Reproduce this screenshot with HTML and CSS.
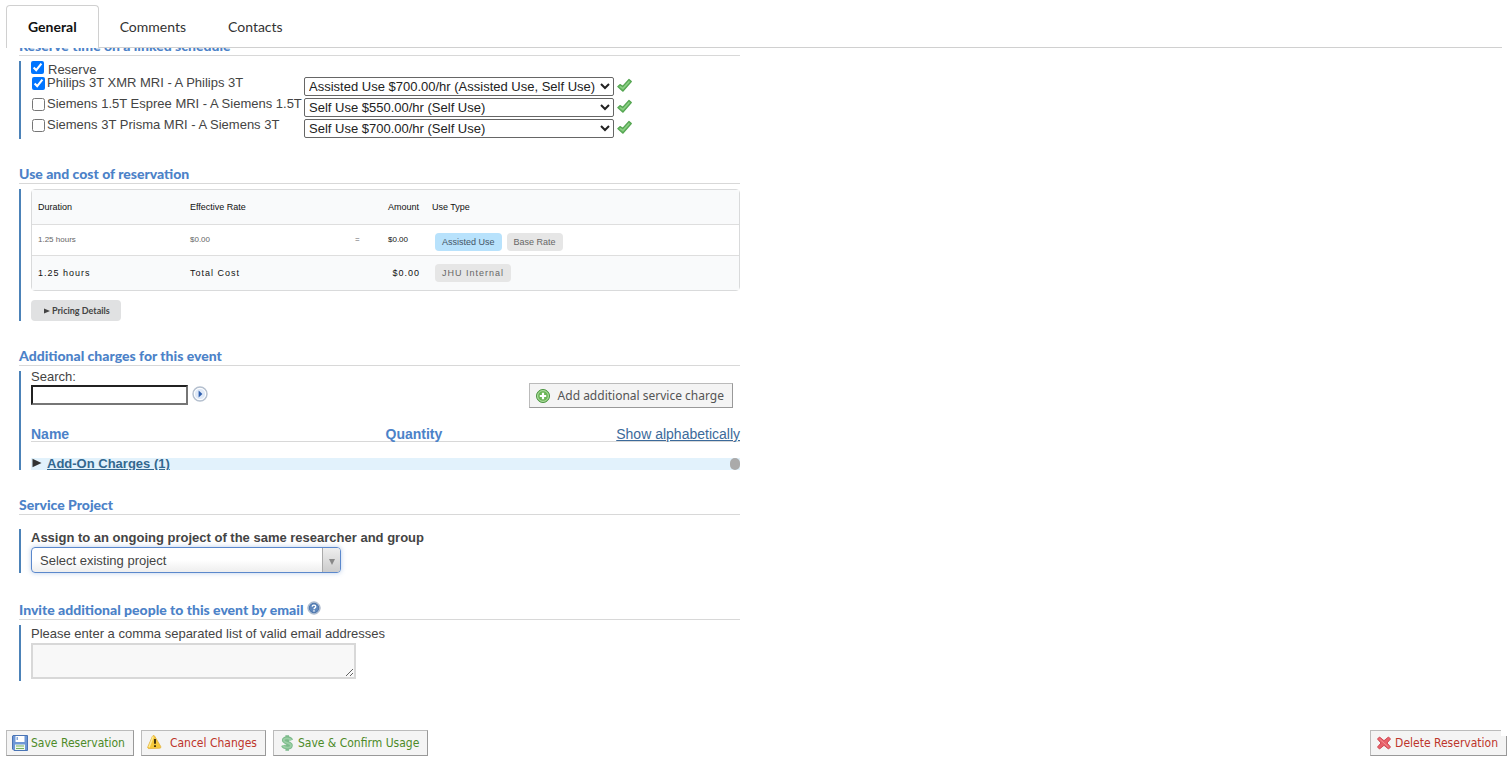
FILE: index.html
```html
<!DOCTYPE html>
<html lang="en">
<head>
    <meta charset="UTF-8">
    <meta name="viewport" content="width=device-width, initial-scale=1.0">
    <title>Reservation</title>
    <link rel="stylesheet" href="styles.css">
</head>
<body>
    <!-- Shared icons -->
    <svg class="icon-defs" aria-hidden="true">
        <symbol id="icon-check" viewBox="0 0 15 15">
            <path d="M.8 8.600 3 6.600l2.700 1.700L12 1.500l2.300 2L6 13.200z" fill="#6fbf6a" stroke="#55a552" stroke-width="1.200" stroke-linejoin="round"/>
            <path d="M3 8.500l3 2 6.300-7" fill="none" stroke="#8fd088" stroke-width="1.200"/>
        </symbol>
    </svg>

    <nav class="tabs">
        <a href="#general" class="tab active">General</a>
        <a href="#comments" class="tab">Comments</a>
        <a href="#contacts" class="tab">Contacts</a>
    </nav>

    <main class="panel" id="general">
        <!-- Linked schedule -->
        <section class="section scrolled">
            <h2>Reserve time on a linked schedule</h2>
            <div class="block linked">
                <label class="reserve"><input type="checkbox" checked> Reserve</label>
                <div class="schedule-row">
                    <label><input type="checkbox" checked>Philips 3T XMR MRI - A Philips 3T</label>
                    <select aria-label="Philips 3T rate">
                        <option>Assisted Use $700.00/hr (Assisted Use, Self Use)</option>
                    </select>
                    <svg class="check"><use href="#icon-check"/></svg>
                </div>
                <div class="schedule-row">
                    <label><input type="checkbox">Siemens 1.5T Espree MRI - A Siemens 1.5T</label>
                    <select aria-label="Siemens 1.5T rate">
                        <option>Self Use $550.00/hr (Self Use)</option>
                    </select>
                    <svg class="check"><use href="#icon-check"/></svg>
                </div>
                <div class="schedule-row">
                    <label><input type="checkbox">Siemens 3T Prisma MRI - A Siemens 3T</label>
                    <select aria-label="Siemens 3T rate">
                        <option>Self Use $700.00/hr (Self Use)</option>
                    </select>
                    <svg class="check"><use href="#icon-check"/></svg>
                </div>
            </div>
        </section>

        <!-- Use and cost -->
        <section class="section">
            <h2>Use and cost of reservation</h2>
            <div class="block">
                <table class="cost-table">
                    <thead>
                        <tr>
                            <th class="col-duration">Duration</th>
                            <th class="col-rate">Effective Rate</th>
                            <th class="col-equals"></th>
                            <th class="col-amount">Amount</th>
                            <th>Use Type</th>
                        </tr>
                    </thead>
                    <tbody>
                        <tr>
                            <td>1.25 hours</td>
                            <td>$0.00</td>
                            <td>=</td>
                            <td class="amount">$0.00</td>
                            <td><span class="badge blue">Assisted Use</span><span class="badge">Base Rate</span></td>
                        </tr>
                    </tbody>
                    <tfoot>
                        <tr>
                            <td>1.25 hours</td>
                            <td>Total Cost</td>
                            <td></td>
                            <td class="total">$0.00</td>
                            <td><span class="badge">JHU Internal</span></td>
                        </tr>
                    </tfoot>
                </table>
                <button type="button" class="pricing-btn"><svg viewBox="0 0 6 6"><path d="M0 0.5 6 3 0 5.5z" fill="#444"/></svg>Pricing Details</button>
            </div>
        </section>

        <!-- Additional charges -->
        <section class="section">
            <h2>Additional charges for this event</h2>
            <div class="block">
                <div class="search-row">
                    <div>
                        <label for="search">Search:</label>
                        <div class="search-field">
                            <input type="text" id="search">
                            <button type="button" class="go-btn" aria-label="Go">
                                <svg viewBox="0 0 16 16">
                                    <circle cx="8" cy="8" r="7" fill="#eef3fa" stroke="#b4bfce" stroke-width="1.4"/>
                                    <circle cx="8" cy="8" r="5.6" fill="#dfe9f7" stroke="#fff" stroke-width="1"/>
                                    <path d="M6.6 4.6 10.4 8l-3.8 3.4z" fill="#2f5fae"/>
                                </svg>
                            </button>
                        </div>
                    </div>
                    <button type="button" class="btn add-btn">
                        <svg viewBox="0 0 16 16">
                            <circle cx="8" cy="8" r="6.500" fill="#6ab556" stroke="#4a9440" stroke-width="1"/>
                            <circle cx="8" cy="8" r="5.400" fill="none" stroke="#b5dfa9" stroke-width="1"/>
                            <path d="M8 4.800v6.400M4.800 8h6.400" stroke="#fff" stroke-width="2.2"/>
                        </svg>
                        Add additional service charge
                    </button>
                </div>
                <div class="charges-head">
                    <span>Name</span>
                    <span>Quantity</span>
                    <a href="#alphabetical">Show alphabetically</a>
                </div>
                <div class="charges-list">
                    <svg viewBox="0 0 10 10"><path d="M0.5 0.8 9.5 5 0.5 9.2z" fill="#333"/></svg>
                    <a href="#add-on">Add-On Charges (1)</a>
                    <span class="thumb"></span>
                </div>
            </div>
        </section>

        <!-- Service project -->
        <section class="section">
            <h2>Service Project</h2>
            <div class="block project">
                <label for="project">Assign to an ongoing project of the same researcher and group</label>
                <div class="project-select">
                    <select id="project">
                        <option>Select existing project</option>
                    </select>
                    <span class="arrow"></span>
                </div>
            </div>
        </section>

        <!-- Invite by email -->
        <section class="section">
            <h2 class="with-help">Invite additional people to this event by email
                <svg viewBox="0 0 16 16">
                    <circle cx="8" cy="8" r="7" fill="#dce6f2" stroke="#8d9fb8" stroke-width="1"/>
                    <circle cx="8" cy="8" r="5.5" fill="#5f88bd" stroke="#3f68a0" stroke-width="1"/>
                    <path d="M5.9 6.4C6 4.2 10 4.2 10 6.5 10 8 8 7.8 8 9.4" fill="none" stroke="#fff" stroke-width="1.5"/>
                    <circle cx="8" cy="11.3" r="0.9" fill="#fff"/>
                </svg>
            </h2>
            <div class="block invite">
                <label for="emails">Please enter a comma separated list of valid email addresses</label>
                <textarea id="emails"></textarea>
            </div>
        </section>
    </main>

    <footer class="actions">
        <button type="button" class="btn green">
            <svg viewBox="0 0 16 16">
                <path d="M1 .5h14.5v15H2L.5 14V1z" fill="#6d97d6" stroke="#4a74b5"/>
                <path d="M3.5 1h9v6h-9z" fill="#fff"/>
                <path d="M4.5 2h1.500v3H4.500z" fill="#8aa9d8"/>
                <path d="M3 9.5h10V15H3z" fill="#eff6ea"/>
                <path d="M4 11h8M4 13.5h8" stroke="#75b25e"/>
            </svg>
            Save Reservation
        </button>
        <button type="button" class="btn red cancel-btn">
            <svg viewBox="0 0 16 16">
                <path d="M5.500 1.2c.6-1 1.600-1 2.200 0l6 10.200c.5 1-.1 1.800-1.100 1.800L2 13.600c-1.200 0-1.600-.9-1.100-1.900z" fill="#f6c93a" stroke="#e2b03a" stroke-width=".8"/>
                <path d="M6.200 1.500 2 12.300" stroke="#fdeb98" stroke-width="1.5"/>
                <path d="M8 4v4.800M8 10.200v1.800" stroke="#33270a" stroke-width="1.8"/>
            </svg>
            Cancel Changes
        </button>
        <button type="button" class="btn green confirm-btn">
            <svg viewBox="0 0 16 16">
                <path d="M12.300 5.200C11.500 2.800 4.800 2.200 4.700 5.100c-.1 3.200 7.500 2.200 7.300 5.400-.2 3.200-7 2.700-8.200-.1M8.200.3v15.400" fill="none" stroke="#7bb98a" stroke-width="3.600"/>
                <path d="M12.200 5.200C11.200 3 5 2.500 4.700 5.100c-.1 3.200 7.500 2.200 7.300 5.400-.2 3-6.800 2.600-8-.1" fill="none" stroke="#9bcfa5" stroke-width="1.800"/>
            </svg>
            Save &amp; Confirm Usage
        </button>
        <button type="button" class="btn red delete-btn">
            <svg viewBox="0 0 16 16">
                <path d="M3.500 2 8 5.700 12.500 2l2 2L11 8l3.500 4-2 2L8 10.300 3.500 14l-2-2L5 8 1.500 4z" fill="#e8606a" stroke="#d04852" stroke-width="1" stroke-linejoin="round"/>
                <path d="M3.500 4l9 8" stroke="#f28f92" stroke-width="1"/>
            </svg>
            Delete Reservation
        </button>
    </footer>
</body>
</html>
```
FILE: styles.css
```css
* {
    box-sizing: border-box;
}

body {
    margin: 0;
    background-color: #fff;
    color: #444;
    font-family: "Liberation Sans", Arial, sans-serif;
    font-size: 13px;
    line-height: 15px;
}

button,
select,
input,
textarea {
    font-family: inherit;
    margin: 0;
}

svg {
    flex: none;
}

.icon-defs {
    display: none;
}

/* Tabs */
.tabs {
    display: flex;
    margin: 5px 5px 0 6px;
    border-bottom: 1px solid #d0d0d0;
    font-family: Lato, sans-serif;
    font-size: 14px;
}

.tab {
    padding: 14px 21px 13px;
    color: #333;
    text-decoration: none;
}

.tab.active {
    margin-bottom: -1px;
    padding: 13px 21px 14px;
    border: 1px solid #d0d0d0;
    border-bottom: none;
    border-radius: 4px 4px 0 0;
    background-color: #fff;
    color: #111;
    font-weight: bold;
}

/* Sections */
.panel {
    overflow: hidden;
    padding: 0 19px;
}

.section {
    max-width: 721px;
    margin-bottom: 24px;
}

.section.scrolled {
    margin-top: -13px;
}

h2 {
    margin: 0 0 5px;
    padding: 2px 0 1px;
    border-bottom: 1px solid #d8d8d8;
    color: #4c82c8;
    font-family: Lato, sans-serif;
    font-size: 14px;
    font-weight: 900;
    line-height: 17px;
}

h2.with-help {
    display: flex;
    gap: 4px;
    padding-top: 4px;
}

.with-help svg {
    width: 14px;
    height: 14px;
}

.block {
    padding-left: 10px;
    border-left: 2px solid #4c82b8;
}

/* Linked schedule */
.linked {
    padding-bottom: 1px;
}

.linked input {
    width: 13px;
    height: 13px;
    margin: 0;
}

.reserve {
    display: flex;
    align-items: flex-start;
    gap: 4px;
    height: 16px;
    line-height: 17px;
}

.schedule-row {
    display: flex;
    gap: 3px;
    height: 19px;
}

.schedule-row + .schedule-row {
    margin-top: 2px;
}

.schedule-row label {
    display: flex;
    gap: 2px;
    width: 270px;
    padding-left: 1px;
    line-height: 12px;
    white-space: nowrap;
}

.schedule-row select {
    width: 310px;
    height: 19px;
    padding: 0;
    border: 1px solid #666;
    border-radius: 2px;
    background-color: #fff;
    color: #222;
    font-size: 13px;
}

.check {
    width: 15px;
    height: 15px;
    margin-top: 1px;
}

/* Cost table */
.cost-table {
    width: 100%;
    border: 1px solid #d9dadb;
    border-radius: 4px;
    border-spacing: 0;
    table-layout: fixed;
    font-size: 8px;
    line-height: 10px;
}

.cost-table th,
.cost-table td {
    padding: 0 6px;
    text-align: left;
}

.cost-table th {
    height: 34px;
    background-color: #f9fafb;
    color: #111;
    font-weight: normal;
    font-size: 9px;
}

.cost-table tbody td {
    height: 32px;
    border-top: 1px solid #dedede;
    border-bottom: 1px solid #dedede;
    color: #666;
}

.cost-table tfoot td {
    height: 34px;
    background-color: #f9fafb;
    color: #111;
    font-size: 9px;
    letter-spacing: 1px;
}

.col-duration {
    width: 152px;
}

.col-rate {
    width: 165px;
}

.col-equals {
    width: 33px;
}

.col-amount {
    width: 44px;
}

.cost-table tbody .amount {
    color: #111;
}

.cost-table .total {
    text-align: right;
}

.badge {
    display: inline-block;
    margin: 4px 2px 0 3px;
    padding: 4px 7px;
    border-radius: 4px;
    background-color: #e6e6e6;
    color: #666;
    font-size: 9px;
}

tfoot .badge {
    margin-top: 0;
}

.badge.blue {
    background-color: #b8e2fc;
    color: #456;
}

.pricing-btn {
    display: flex;
    align-items: center;
    gap: 2px;
    height: 21px;
    margin-top: 9px;
    padding: 0 11px 0 13px;
    border: none;
    border-radius: 4px;
    background-color: #e0e1e2;
    color: #444;
    font-family: Lato, sans-serif;
    font-size: 9px;
    font-weight: bold;
}

.pricing-btn svg {
    width: 6px;
    height: 6px;
}

/* Additional charges */
.search-row {
    display: flex;
    justify-content: space-between;
    align-items: flex-end;
    padding-right: 7px;
}

.search-row label {
    display: block;
    padding-bottom: 2px;
    line-height: 12px;
}

.search-field {
    display: flex;
    align-items: flex-start;
    gap: 4px;
    padding-bottom: 3px;
}

.search-field input {
    width: 157px;
    height: 20px;
    border: 2px inset #767676;
    background-color: #fff;
}

.go-btn {
    display: flex;
    padding: 1px 0 0;
    border: none;
    background: none;
}

.go-btn svg {
    width: 16px;
    height: 16px;
}

.charges-head {
    display: grid;
    grid-template-columns: 2fr 1fr 1fr;
    height: 14px;
    margin-top: 20px;
    border-bottom: 1px solid #d8d8d8;
    color: #4c82c8;
    font-size: 14px;
    font-weight: bold;
    line-height: 13px;
}

.charges-head a {
    color: #3c6a9a;
    font-weight: normal;
    text-align: right;
}

.charges-list {
    display: flex;
    align-items: flex-start;
    gap: 5px;
    height: 12px;
    margin-top: 16px;
    padding-left: 1px;
    overflow: hidden;
    background-color: #e2f2fc;
    font-weight: bold;
    line-height: 11px;
}

.charges-list svg {
    width: 10px;
    height: 10px;
}

.charges-list a {
    color: #33688f;
    text-underline-offset: 1px;
}

.thumb {
    width: 10px;
    height: 12px;
    margin-left: auto;
    border-radius: 5px;
    background-color: #aaa;
}

/* Service project */
.project {
    margin-top: 14px;
}

.project label {
    display: block;
    padding-bottom: 1px;
    font-weight: bold;
    line-height: 17px;
}

.project-select {
    display: grid;
    width: 310px;
    height: 26px;
    border: 1px solid #5b88cc;
    border-radius: 4px;
    box-shadow: 0 0 5px rgba(80, 130, 200, 0.4);
    background: linear-gradient(#fff 50%, #eee);
}

.project-select select,
.project-select .arrow {
    grid-area: 1 / 1;
}

.project-select select {
    padding: 0 8px;
    border: none;
    outline: none;
    background: none;
    color: #444;
    font-size: 13px;
    appearance: none;
}

.arrow {
    display: flex;
    align-items: center;
    justify-content: center;
    justify-self: end;
    width: 18px;
    border-left: 1px solid #aaa;
    border-radius: 0 3px 3px 0;
    background: linear-gradient(#eee, #ccc);
    pointer-events: none;
}

.arrow::after {
    content: "";
    margin-top: 4px;
    border: 3px solid transparent;
    border-top: 6px solid #888;
    border-bottom: none;
}

/* Invite */
.invite {
    padding-bottom: 2px;
}

.invite label {
    display: block;
    padding-bottom: 1px;
    line-height: 17px;
}

.invite textarea {
    display: block;
    width: 325px;
    height: 36px;
    border: 2px solid #d8d8d8;
    background-color: #f8f8f8;
}

/* Buttons */
.btn {
    display: flex;
    align-items: center;
    gap: 3px;
    height: 26px;
    padding: 0 8px 0 5px;
    border: 1px solid #bbb;
    border-right-color: #999;
    border-bottom-color: #999;
    background-color: #f4f4f4;
    color: #555;
    font-family: "DejaVu Sans Condensed", "DejaVu Sans", sans-serif;
    font-size: 12px;
    white-space: nowrap;
}

.btn svg {
    width: 16px;
    height: 16px;
}

.btn.green {
    color: #4d8a28;
}

.btn.red {
    color: #bd352b;
}

.add-btn {
    gap: 7px;
    height: 25px;
    font-family: "Noto Sans", sans-serif;
}

.cancel-btn {
    gap: 7px;
}

.actions {
    display: flex;
    gap: 7px;
    margin-top: 25px;
    padding: 0 0 5px 6px;
}

.delete-btn {
    position: relative;
    margin-left: auto;
}

.delete-btn::after {
    content: "";
    position: absolute;
    top: -1px;
    right: -1px;
    width: 6px;
    height: 6px;
    background-color: #fff;
}
```
